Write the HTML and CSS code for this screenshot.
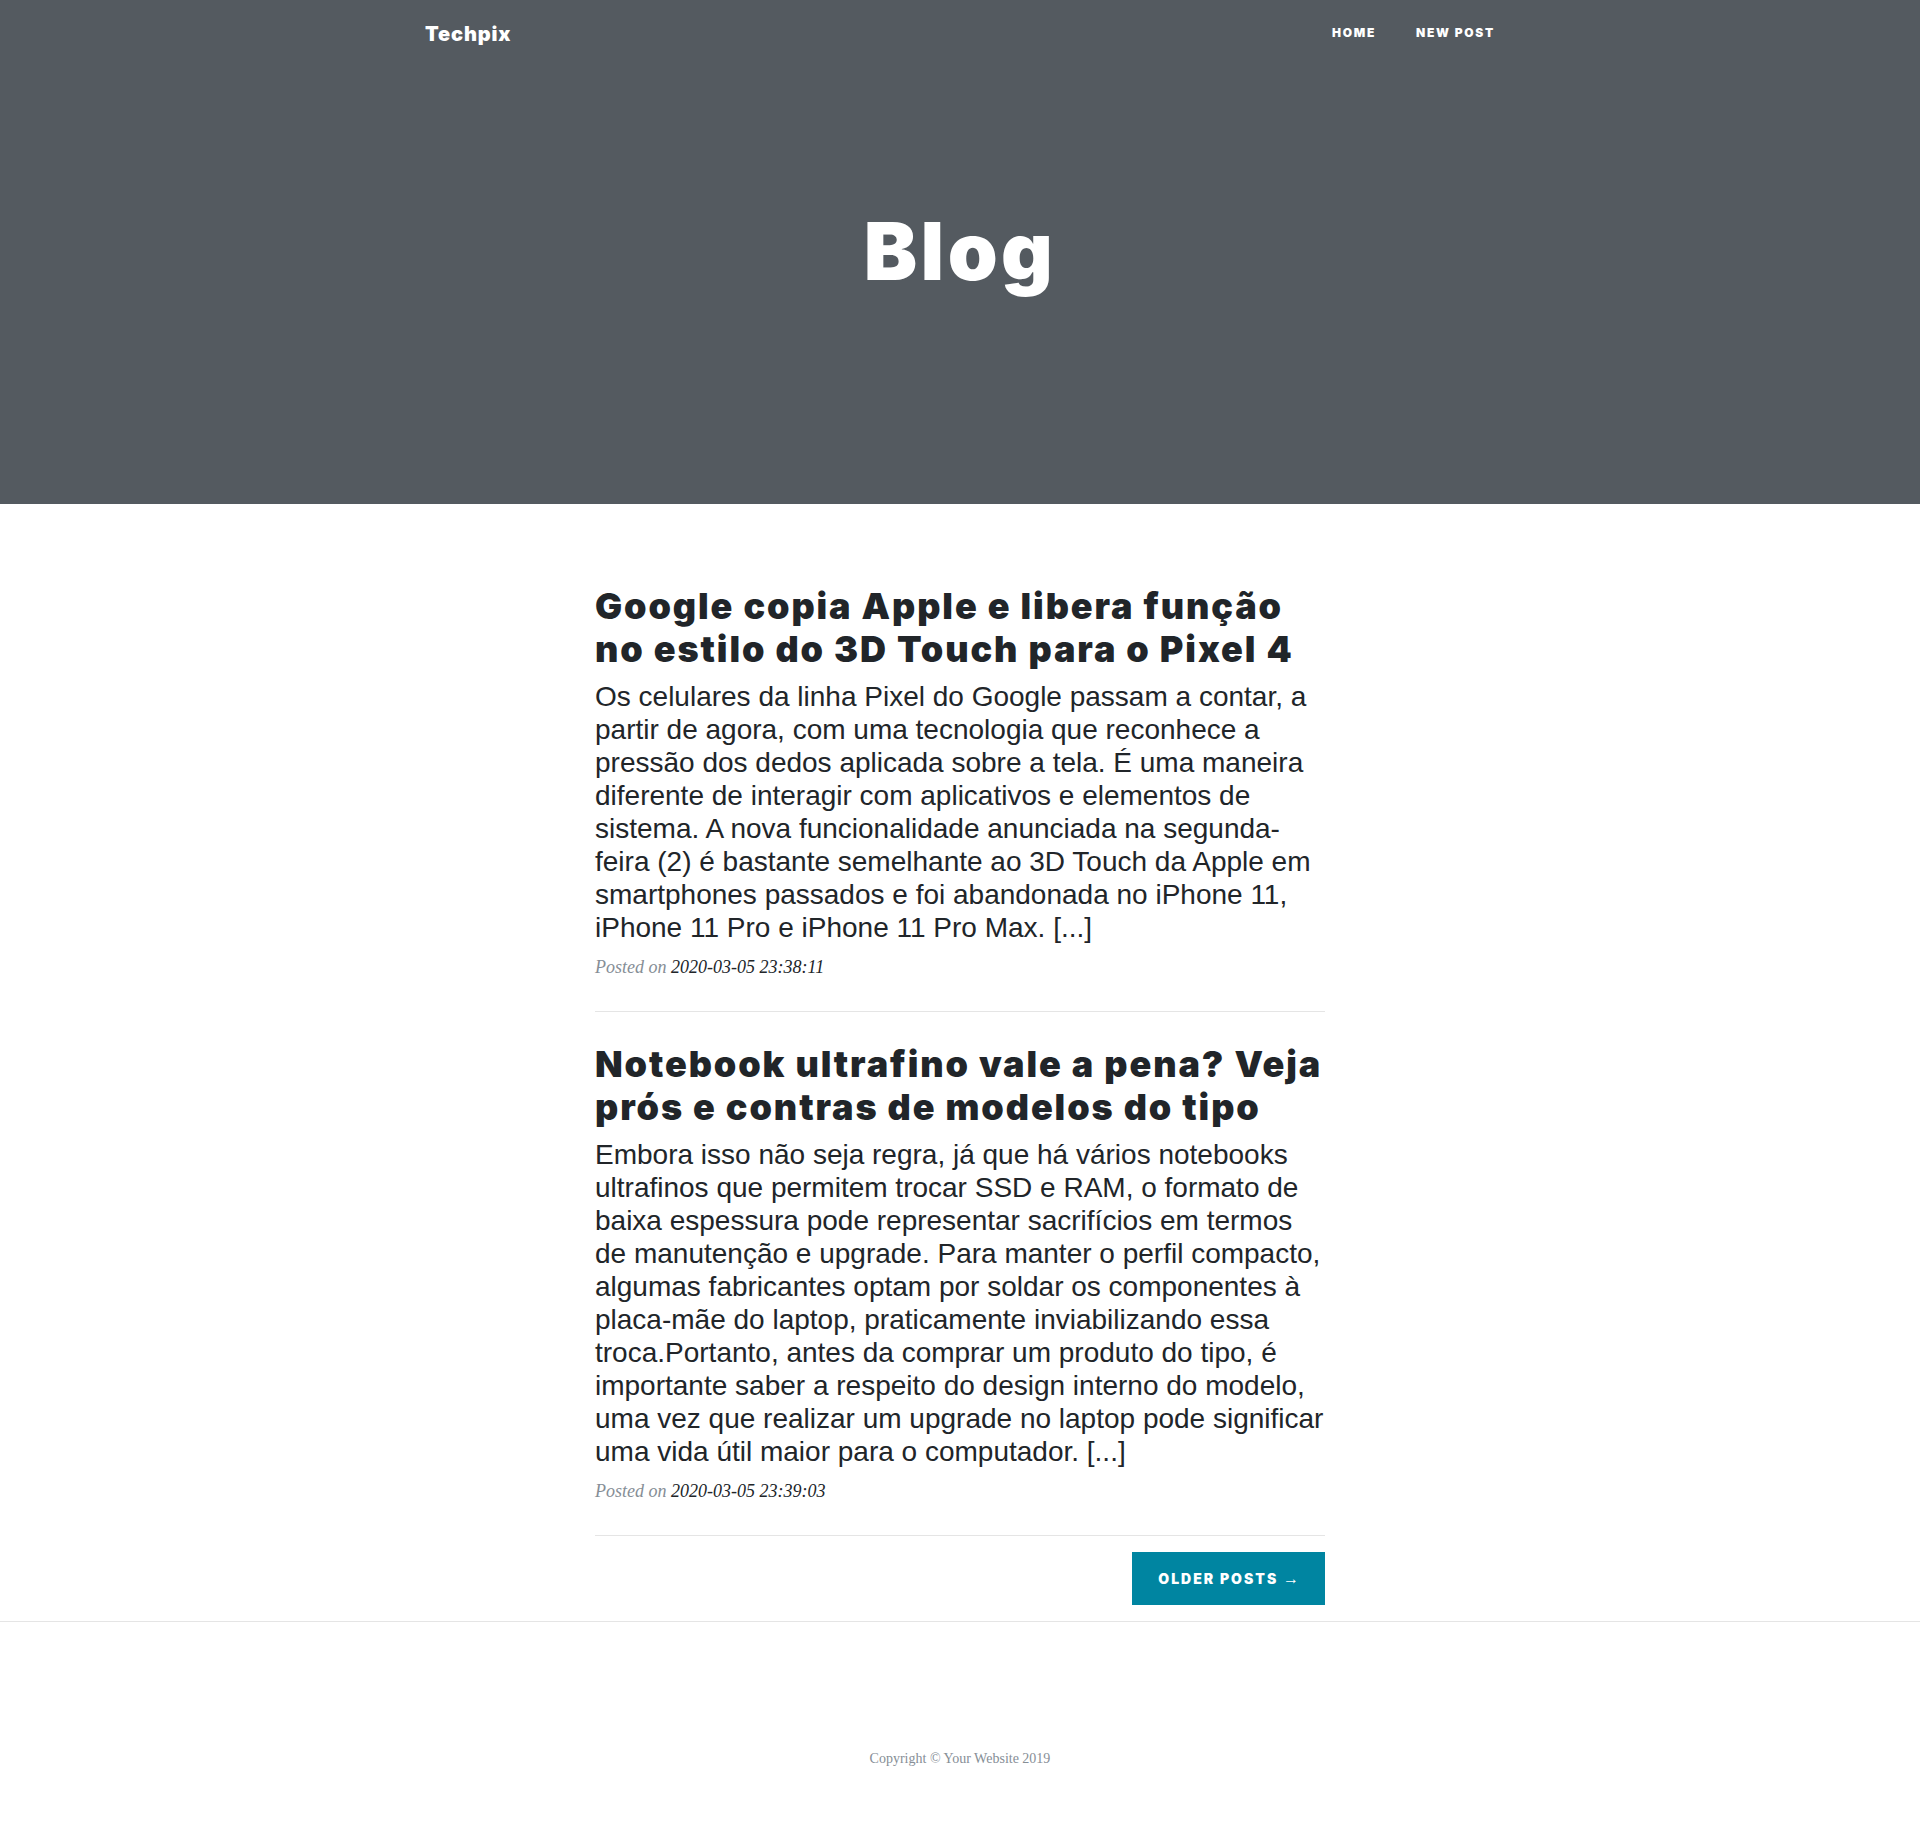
FILE: index.html
```html
<!DOCTYPE html>
<html lang="pt-BR">
<head>
<meta charset="utf-8">
<title>Techpix</title>
<link rel="stylesheet" href="styles.css">
</head>
<body>
<nav class="topnav">
  <div class="nav-inner">
    <a class="brand" href="#">Techpix</a>
    <ul class="nav-links">
      <li><a href="#">Home</a></li>
      <li><a href="#">New Post</a></li>
    </ul>
  </div>
</nav>
<header class="masthead">
  <h1 class="page-title">Blog</h1>
</header>
<main class="content">
  <article class="post">
    <a href="#" class="post-link">
      <h2 class="post-title">Google copia Apple e libera função no estilo do 3D Touch para o Pixel 4</h2>
      <h3 class="post-subtitle">Os celulares da linha Pixel do Google passam a contar, a partir de agora, com uma tecnologia que reconhece a pressão dos dedos aplicada sobre a tela. É uma maneira diferente de interagir com aplicativos e elementos de sistema. A nova funcionalidade anunciada na segunda-feira (2) é bastante semelhante ao 3D Touch da Apple em smartphones passados e foi abandonada no iPhone 11, iPhone 11 Pro e iPhone 11 Pro Max. [...]</h3>
    </a>
    <p class="post-meta">Posted on <a href="#">2020-03-05 23:38:11</a></p>
  </article>
  <hr class="divider">
  <article class="post">
    <a href="#" class="post-link">
      <h2 class="post-title">Notebook ultrafino vale a pena? Veja prós e contras de modelos do tipo</h2>
      <h3 class="post-subtitle">Embora isso não seja regra, já que há vários notebooks ultrafinos que permitem trocar SSD e RAM, o formato de baixa espessura pode representar sacrifícios em termos de manutenção e upgrade. Para manter o perfil compacto, algumas fabricantes optam por soldar os componentes à placa-mãe do laptop, praticamente inviabilizando essa troca.Portanto, antes da comprar um produto do tipo, é importante saber a respeito do design interno do modelo, uma vez que realizar um upgrade no laptop pode significar uma vida útil maior para o computador. [...]</h3>
    </a>
    <p class="post-meta">Posted on <a href="#">2020-03-05 23:39:03</a></p>
  </article>
  <hr class="divider">
  <div class="pager">
    <a class="btn-older" href="#">Older Posts <span class="arrow">&rarr;</span></a>
  </div>
</main>
<hr class="page-rule">
<footer class="footer">
  <p class="copyright">Copyright &copy; Your Website 2019</p>
</footer>
</body>
</html>
```
FILE: styles.css
```css
* {
  box-sizing: border-box;
}

body {
  margin: 0;
  font-family: "Liberation Serif", "Times New Roman", serif;
  font-size: 20px;
  color: #212529;
  background: #fff;
}

/* heavy display face (stand-in for Arial Black) */
.brand,
.nav-links a,
.page-title,
.post-title,
.btn-older {
  font-family: "Inter", "DejaVu Sans", sans-serif;
  font-weight: 900;
}

.topnav {
  position: absolute;
  top: 0;
  left: 0;
  right: 0;
  z-index: 2;
}

.nav-inner {
  width: 1140px;
  margin: 0 auto;
  padding: 13px 15px 0;
  display: flex;
  justify-content: space-between;
  align-items: flex-start;
}

.brand {
  margin-left: 20px;
  padding-top: 6px;
  font-size: 20px;
  line-height: 30px;
  letter-spacing: 0.85px;
  color: #fff;
  text-decoration: none;
}

.nav-links {
  list-style: none;
  margin: 0;
  padding: 0;
  display: flex;
}

.nav-links a {
  display: block;
  padding: 11px 20px 9px;
  font-size: 12px;
  line-height: 18px;
  letter-spacing: 1.7px;
  text-transform: uppercase;
  color: #fff;
  text-decoration: none;
}

.masthead {
  background: #545a60;
  padding: 200px 0;
  margin-bottom: 50px;
  text-align: center;
}

.page-title {
  margin: 0 0 8px;
  padding-top: 3px;
  height: 96px;
  font-size: 80px;
  line-height: 1.2;
  letter-spacing: 3.4px;
  color: #fff;
}

.content {
  display: flow-root;
  width: 730px;
  margin: 0 auto;
}

.post-link {
  color: #212529;
  text-decoration: none;
}

.post-title {
  margin: 30px 0 10px;
  padding-top: 1px;
  height: 86px;
  font-size: 36px;
  line-height: 43px;
  letter-spacing: 1.9px;
  color: #212529;
}

.post-subtitle {
  margin: 0 0 10px;
  font-family: "Liberation Sans", Arial, sans-serif;
  font-weight: 400;
  font-size: 28px;
  line-height: 33px;
  color: #212529;
}

.post-meta {
  margin: 0 0 30px;
  font-size: 18px;
  line-height: 27px;
  font-style: italic;
  color: #868e96;
}

.post-meta a {
  color: #212529;
  text-decoration: none;
}

.divider {
  margin: 16px 0;
  height: 0;
  border: 0;
  border-top: 1px solid rgba(0, 0, 0, 0.1);
}

.pager {
  display: flex;
  justify-content: flex-end;
}

.btn-older {
  display: inline-block;
  padding: 15px 25px;
  border: 1px solid #0085a1;
  background: #0085a1;
  color: #fff;
  font-size: 14px;
  line-height: 21px;
  letter-spacing: 2px;
  text-transform: uppercase;
  text-decoration: none;
}

.arrow {
  font-family: "Liberation Sans", Arial, sans-serif;
  font-weight: 700;
  font-size: 16px;
  line-height: 21px;
  letter-spacing: 0;
}

.page-rule {
  margin: 16px 0 0;
  height: 0;
  border: 0;
  border-top: 1px solid rgba(0, 0, 0, 0.1);
}

.footer {
  padding: 126px 0 63px;
}

.copyright {
  margin: 0;
  font-size: 14px;
  line-height: 21px;
  text-align: center;
  color: #868e96;
}
```
